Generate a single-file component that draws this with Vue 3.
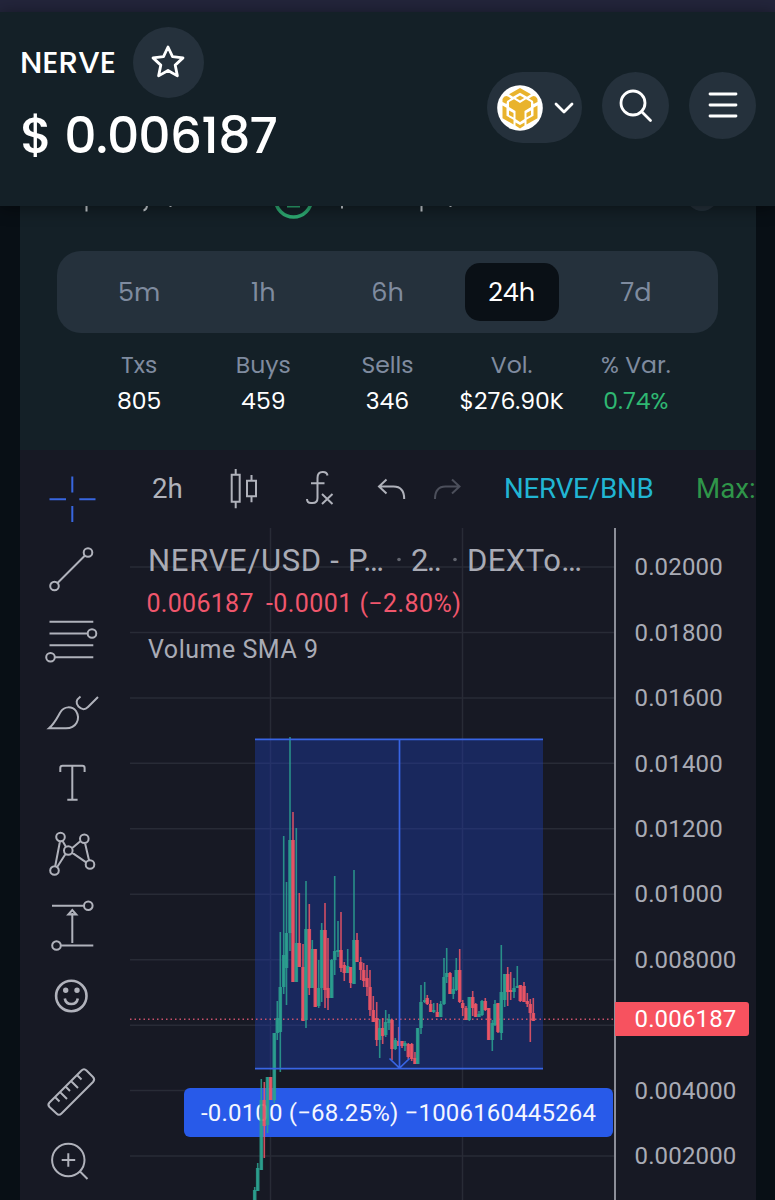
<script setup>
import { computed, ref } from 'vue';

const stats = [
  { period: '5m', label: 'Txs', value: '805' },
  { period: '1h', label: 'Buys', value: '459' },
  { period: '6h', label: 'Sells', value: '346' },
  { period: '24h', label: 'Vol.', value: '$276.90K' },
  { period: '7d', label: '% Var.', value: '0.74%', positive: true }
];
const active = ref('24h');

const prices = ['0.02000', '0.01800', '0.01600', '0.01400', '0.01200', '0.01000', '0.008000', '', '0.004000', '0.002000'];
const gridRows = prices.map((_, i) => 567 + i * 65.45);

// x, high, body top, body bottom, low, direction (1 up, 0 down)
const raw = [
  [254.7, 1187, 1190, 1200, 1200, 1], [257.7, 1163, 1168, 1191, 1191, 1], [261.3, 1079, 1100, 1170, 1170, 1],
  [264.3, 1082, 1100, 1126, 1158, 0], [267.5, 1077, 1077, 1125, 1133, 1], [270.7, 1077, 1077, 1100, 1100, 0],
  [274.3, 1033, 1033, 1100, 1103, 1], [277.3, 1001, 1018, 1033, 1040, 1], [280.3, 932, 987, 1032, 1072, 1],
  [283.7, 836, 955, 987, 994, 1], [286.5, 882, 933, 968, 1005, 1], [290, 737, 840, 933, 951, 1],
  [293, 812, 840, 982, 982, 0], [296.3, 828, 943, 982, 982, 1], [299.3, 893, 943, 967, 967, 0],
  [303, 944, 967, 1021, 1021, 0], [306, 881, 929, 1020, 1028, 1], [309.3, 904, 929, 988, 995, 0],
  [312.3, 940, 949, 988, 988, 1], [315.3, 949, 949, 1007, 1007, 0], [318.7, 960, 988, 1006, 1008, 1],
  [321.7, 923, 930, 988, 1002, 1], [325, 903, 930, 990, 1008, 0], [328, 938, 988, 998, 1010, 0],
  [331.7, 959, 960, 998, 998, 1], [334.7, 876, 951, 960, 975, 1], [338, 921, 950, 952, 957, 1],
  [341, 912, 950, 968, 972, 0], [344.3, 962, 965, 973, 981, 0], [347.7, 949, 966, 973, 973, 1],
  [350.7, 967, 967, 983, 988, 0], [354, 870, 940, 984, 984, 1], [357, 933, 940, 962, 962, 0],
  [360.7, 957, 962, 970, 980, 0], [363.7, 963, 970, 981, 987, 0], [367, 965, 978, 987, 996, 0],
  [370, 970, 987, 1010, 1016, 0], [373.3, 996, 1010, 1022, 1022, 0], [376.7, 1002, 1018, 1040, 1046, 0],
  [379.7, 1019, 1028, 1040, 1058, 1], [382.7, 1018, 1028, 1036, 1044, 0], [385.7, 1010, 1022, 1035, 1037, 1],
  [389, 1014, 1019, 1023, 1030, 1], [392, 1019, 1020, 1049, 1060, 0], [395.3, 1038, 1040, 1049, 1050, 1],
  [398.7, 1027, 1041, 1046, 1046, 0], [402, 1041, 1041, 1046, 1048, 0], [405, 1041, 1043, 1046, 1051, 1],
  [408.3, 1043, 1044, 1057, 1059, 0], [411.7, 1043, 1044, 1059, 1061, 0], [415, 1052, 1058, 1064, 1064, 0],
  [417.7, 1028, 1028, 1064, 1064, 1], [421, 985, 1002, 1028, 1034, 1], [424.7, 982, 1000, 1002, 1003, 1],
  [427.3, 995, 998, 1004, 1005, 0], [430.7, 1000, 1004, 1012, 1012, 0], [433.7, 1003, 1010, 1012, 1013, 1],
  [437.3, 1003, 1012, 1017, 1017, 0], [440.7, 1001, 1004, 1017, 1017, 1], [444, 958, 977, 1004, 1005, 1],
  [446.7, 948, 973, 977, 983, 1], [450, 972, 973, 994, 994, 0], [453.3, 977, 989, 994, 999, 1],
  [456.3, 958, 970, 990, 991, 1], [459.7, 949, 970, 1002, 1003, 0], [462.7, 1000, 1003, 1008, 1016, 0],
  [466, 1006, 1008, 1020, 1020, 0], [469.3, 997, 997, 1020, 1021, 1], [472.7, 991, 997, 1008, 1016, 0],
  [475.7, 1003, 1004, 1017, 1017, 0], [479, 1011, 1014, 1017, 1017, 1], [482, 1000, 1001, 1015, 1016, 1],
  [485.3, 998, 1001, 1010, 1011, 0], [488.7, 1008, 1008, 1040, 1040, 0], [492.3, 1020, 1023, 1040, 1051, 1],
  [495, 1000, 1004, 1025, 1026, 1], [498, 1003, 1003, 1032, 1033, 0], [501.3, 945, 992, 1033, 1040, 1],
  [504.7, 974, 974, 1000, 1007, 1], [507.7, 967, 974, 992, 1006, 0], [510.7, 972, 990, 992, 1000, 0],
  [514, 978, 988, 992, 998, 1], [517.3, 966, 986, 988, 988, 1], [520.3, 985, 985, 1001, 1002, 0],
  [524, 982, 986, 1002, 1002, 0], [527.3, 993, 1001, 1004, 1007, 0], [530.3, 999, 1004, 1013, 1042, 0],
  [533.3, 998, 1013, 1021, 1021, 0]
];
const candles = computed(() => raw.map(([x, high, top, bottom, low, up]) => ({
  x, high, top, low, height: Math.max(bottom - top, 1.5), color: up ? '#2ba18f' : '#ef5665'
})));

const circle = (x, y, r = 4.3) => `M${x - r} ${y}a${r} ${r} 0 1 0 ${2 * r} 0a${r} ${r} 0 1 0 ${-2 * r} 0`;
const tools = [
  { name: 'cross', d: 'M72.3 476.500v16M72.3 506v16M49.500 499.300h16.500M79.300 499.300h16.200' },
  { name: 'trend', d: `${circle(88, 552.5)}${circle(54.5, 586)}M57.500 583L85 555.500` },
  { name: 'fib', d: `M49.500 621.700H93.300M49.500 633.500H87.700${circle(92, 633.5)}M49.500 645.300H93.300M54.800 657.300H93.300${circle(50.5, 657.3)}` },
  { name: 'brush', d: 'M49 728.300C55 723 58 716 60.500 712C64 706 72 706 76 711C81 719 76 728.300 66 728.300ZM80.500 696.500C76 700 75.500 703 78.500 706.500C82 710 85 710 88 707L98 697' },
  { name: 'text', d: 'M60.300 772v-4q0-2.300 2.300-2.300h19.700q2.300 0 2.300 2.300v4M72.300 765.700v34M67.300 799.700h10.300' },
  { name: 'pattern', d: `${circle(60.5, 837)}${circle(84.3, 838.7)}${circle(68.3, 850.5)}${circle(54.5, 870.5)}${circle(90, 864.5)}M60 841.300L55.200 866.300M62.500 840.800L66 847M72 848.300L80.600 841M85 843L89 860.300M72 852.600L86.200 862.400M65.500 854L57.200 867` },
  { name: 'range', d: `M52 905.700H84${circle(88.3, 905.7)}M61 945.500H93.300${circle(56.5, 945.5)}M72.300 913v30M68.300 914.500h8l-4-4.500z` },
  { name: 'smile', d: `${circle(71.3, 996, 15.2)}M64.800 998.500q1 5.500 6.500 5.500t6.500-5.500${circle(65.7, 990.2, 1.4)}${circle(77, 990.2, 1.4)}` },
  { name: 'ruler', d: 'M49.500 1102.500L81.500 1070.500Q84 1068 86.500 1070.500L93 1077Q95.300 1079.400 93 1082L61.500 1113.500Q59 1116 56.500 1113.500L49.500 1107Q47.300 1104.700 49.500 1102.500M55 1097l4.500 4.500M60 1092l7 7M65.500 1086.500l4.500 4.500M71 1081l7 7M77 1075l4.500 4.500' },
  { name: 'zoom', d: `${circle(68.3, 1160, 16.2)}M61.700 1160h13.500M68.300 1153.300v13.500M80 1171.500l7.500 7.500` }
].map((tool, i) => ({ ...tool, box: `42 ${463 + i * 71 + (i > 7 ? 25 : 0)} 60 71` }));
</script>

<template>
  <div class="screen">
    <div class="status-bar"></div>
    <header class="header">
      <div class="token">
        <div class="token-name">
          <span>NERVE</span>
          <button class="round star">
            <svg width="36" height="36" viewBox="0 0 36 36"><path d="M18 3l4.500 9.600 10.500 1.300-7.800 7.200 2.200 10.800L18 26.500l-9.400 5.400 2.200-10.800L3 13.900l10.500-1.300z" /></svg>
          </button>
        </div>
        <div class="token-price">$ 0.006187</div>
      </div>
      <div class="actions">
        <button class="chain">
          <svg width="46" height="46" viewBox="0 0 46 46">
            <circle cx="23" cy="23" r="22.800" fill="#fff" />
            <g fill="#e9b32c">
              <path d="M23 3l11 6.300-4 2.500-7-4-7 4-4-2.500z" />
              <path d="M23 10.500l4.200 2.500-4.200 2.400-4.200-2.400z" />
              <path d="M5.500 14q2-4 5.500-2.500l3 2-4 2.500-.5 3-4-2zM40.500 14q-2-4-5.500-2.500l-3 2 4 2.500.5 3 4-2z" />
              <path d="M12 17l5-2.700 6 3.700 6-3.700 5 2.700v5l-6.500 4v8L23 37l-4.500-3v-8L12 22z" />
              <path d="M5.500 20.500l4 2.300v8l7 4v4.700l-11-6.300zM40.500 20.500l-4 2.300v8l-7 4v4.700l11-6.300z" />
              <path d="M12 25.500l4.500 2.500v4.500L12 30zM34 25.500L29.500 28v4.500L34 30zM18.500 37.500l4.500 2.500 4.500-2.500v3L23 43.500l-4.500-3z" />
            </g>
          </svg>
          <svg width="20" height="14" viewBox="0 0 20 14"><path d="M2 3l8 8 8-8" /></svg>
        </button>
        <button class="round">
          <svg width="36" height="36" viewBox="0 0 36 36"><circle cx="15" cy="15" r="12" /><path d="M23.500 23.500l9 9" /></svg>
        </button>
        <button class="round">
          <svg class="menu" width="32" height="32" viewBox="0 0 32 32"><path d="M3 3h26M3 14h26M3 25h26" /></svg>
        </button>
      </div>
    </header>

    <main class="panel">
      <section class="pool">
        <!-- bottom edge of the row scrolled under the header -->
        <svg class="scrolled" width="736" height="14" viewBox="20 206 736 14">
          <path d="M86.500 206v5.500M147 206q-.5 4-3.500 4.500M170.500 206v1M342 206v2.500M421.500 206v5.500M450.500 206v1" fill="none" stroke="#c5cbd0" stroke-width="2" />
          <circle cx="293.500" cy="199" r="18" fill="none" stroke="#2daa72" stroke-width="3.500" />
          <path d="M287 206h13" stroke="#2daa72" stroke-width="3" />
          <circle cx="702" cy="195" r="16" fill="#25313b" />
        </svg>
        <div class="periods">
          <button
            v-for="item in stats"
            :key="item.period"
            :class="{ active: active === item.period }"
            @click="active = item.period"
          >{{ item.period }}</button>
        </div>
        <dl class="stats">
          <div v-for="item in stats" :key="item.label">
            <dt>{{ item.label }}</dt>
            <dd :class="{ positive: item.positive }">{{ item.value }}</dd>
          </div>
        </dl>
      </section>

      <section class="chart">
        <aside class="tools">
          <svg v-for="tool in tools" :key="tool.name" :class="tool.name" width="60" height="71" :viewBox="tool.box">
            <path :d="tool.d" />
          </svg>
        </aside>
        <div class="chart-main">
          <nav class="toolbar">
            <span class="interval">2h</span>
            <svg class="candle-icon" width="32" height="42" viewBox="228 468 32 42">
              <path d="M231.700 474.700h8v27h-8zM235.700 469v5.700M235.700 501.700v6.500M247 480.700h9v15.500h-9zM251.500 475v5.700M251.500 496.200v6" />
            </svg>
            <svg class="fx-icon" width="32" height="42" viewBox="304 468 32 42">
              <path d="M307 499q0 4 4 4h1.500q5 0 5-5v-20q0-6 5-6h.5q4 0 4.500 3.500M311 483.300h13.500M322 494l10.500 10M332.500 494l-10.500 10" />
            </svg>
            <svg class="undo-icon" width="30" height="26" viewBox="377 475 30 26"><path d="M386.500 478.500l-7.500 7 7.500 7M379.500 485.500h14q10.700 0 10.700 12.500" /></svg>
            <svg class="redo-icon" width="30" height="26" viewBox="433 475 30 26"><path d="M452 478.500l7.500 7-7.500 7M459 485.500h-13.500q-10.500 0-10.500 12.500" /></svg>
            <span class="pair">NERVE/BNB</span>
            <span class="max">Max:</span>
          </nav>
          <div class="plot-row">
            <svg class="plot" width="484" height="672" viewBox="130 528 484 672">
              <g stroke="#282b36" stroke-width="1.500">
                <path v-for="y in gridRows" :key="y" :d="`M130 ${y}H614`" />
                <path d="M270.500 528V1200M462.500 528V1200" />
              </g>
              <rect x="255" y="739" width="288" height="330" fill="#1d3fb4" fill-opacity=".4" />
              <path d="M130 1019.300H614" stroke="#c8506a" stroke-width="1.500" stroke-dasharray="1.500 3" />
              <rect x="184" y="1088" width="429" height="49" rx="6" fill="#285ae9" />
              <text x="201" y="1121" textLength="395" fill="#f4f6ff" font-size="24">-0.0100 (−68.25%) −1006160445264</text>
              <g v-for="c in candles" :key="c.x" :fill="c.color" fill-opacity=".85">
                <rect :x="c.x - .8" :y="c.high" width="1.600" :height="c.low - c.high" />
                <rect :x="c.x - 1.8" :y="c.top" width="3.600" :height="c.height" />
              </g>
              <path d="M255 739.300H543M255 1068.700H543M399.500 739V1068M389.500 1058.500l10 9.500 10-9.500" fill="none" stroke="#3865e4" stroke-width="1.700" />
              <g fill="#a9abb5" font-size="31">
                <text x="148" y="571" textLength="236">NERVE/USD - P…</text>
                <text x="411" y="571" textLength="31">2..</text>
                <text x="467" y="571" textLength="115">DEXTo…</text>
              </g>
              <circle cx="399" cy="559.500" r="1.800" fill="#62656f" />
              <circle cx="455" cy="559.500" r="1.800" fill="#62656f" />
              <g fill="#f0566c" font-size="25">
                <text x="146.500" y="612" textLength="107">0.006187</text>
                <text x="266" y="612" textLength="195">-0.0001 (−2.80%)</text>
              </g>
              <text x="148" y="658" textLength="170" fill="#a9abb5" font-size="25">Volume SMA 9</text>
            </svg>
            <div class="axis">
              <span v-for="(price, i) in prices" :key="i">{{ price }}</span>
              <strong class="last-price">0.006187</strong>
            </div>
          </div>
        </div>
      </section>
    </main>
  </div>
</template>

<style>
body {
  margin: 0;
  background: #080f15;
}
</style>

<style scoped>
.screen {
  width: 775px;
  height: 1200px;
  overflow: hidden;
  background: #080f15;
  font-family: Poppins, Inter, sans-serif;
  color: #fff;
}

.status-bar {
  height: 12px;
  background: #23253b;
}

button {
  border: 0;
  padding: 0;
  font: inherit;
  color: inherit;
  display: flex;
  align-items: center;
  justify-content: center;
}

.header {
  position: relative;
  z-index: 1;
  box-sizing: border-box;
  height: 194px;
  padding: 14px 19px 0 20px;
  display: flex;
  justify-content: space-between;
  background: #142027;
  box-shadow: 0 2px 16px rgba(0, 0, 0, .45);
}

.token-name {
  display: flex;
  align-items: center;
  gap: 17px;
  height: 72px;
  font-size: 31px;
  font-weight: 500;
}

.token-name span {
  width: 96px;
  white-space: nowrap;
}

.token-price {
  padding-top: 1px;
  font-size: 50.5px;
  font-weight: 500;
  line-height: 74px;
  letter-spacing: -.9px;
  white-space: nowrap;
}

.actions {
  display: flex;
  align-items: flex-start;
  gap: 20px;
  padding-top: 46px;
}

.round,
.chain {
  width: 67px;
  height: 67px;
  border-radius: 50%;
  background: #25313c;
}

.star {
  width: 71px;
  height: 71px;
}

.star svg {
  margin-right: 1px;
}

.chain {
  box-sizing: border-box;
  width: 95px;
  height: 71px;
  padding: 1px 0 0 2px;
  border-radius: 36px;
  gap: 11px;
}

.header svg {
  fill: none;
  stroke: #fff;
  stroke-width: 2.8;
  stroke-linecap: round;
  stroke-linejoin: round;
}

.chain svg:first-child {
  stroke: none;
}

.menu {
  margin-top: 2px;
}

.panel {
  width: 736px;
  margin-left: 20px;
}

.pool {
  box-sizing: border-box;
  height: 244px;
  padding: 0 38px 0 37px;
  background: #142027;
}

.scrolled {
  display: block;
  margin: 0 -37px 30.5px;
}

.periods,
.stats {
  display: grid;
  grid-template-columns: repeat(5, 1fr);
  padding: 0 20px;
}

.periods {
  box-sizing: border-box;
  height: 82px;
  align-items: center;
  border-radius: 24px;
  background: #25313c;
}

.periods button {
  height: 58px;
  margin: 0 15px;
  padding-top: 1px;
  box-sizing: border-box;
  border-radius: 15px;
  background: none;
  font-size: 25.5px;
  color: #7f8b9f;
}

.periods .active {
  background: #0a1016;
  color: #fff;
}

.stats {
  margin: 14.4px 0 0;
  text-align: center;
  font-size: 23.5px;
  line-height: 36px;
}

.stats dt {
  color: #7f8b9f;
}

.stats dd {
  margin: 0;
  white-space: nowrap;
}

.stats .positive {
  color: #2fb872;
}

.chart {
  display: flex;
  height: 750px;
  overflow: hidden;
  background: #171924;
  font-family: Roboto, sans-serif;
}

.tools {
  width: 110px;
  flex: none;
  display: flex;
  flex-direction: column;
  padding: 13px 0 0 22px;
  box-sizing: border-box;
}

.tools svg {
  flex: none;
}

.tools .ruler {
  margin-top: 25px;
}

.tools path,
.toolbar path {
  fill: none;
  stroke: #b0b2bb;
  stroke-width: 2;
}

.tools .cross path {
  stroke: #3866df;
}

.tools .smile path {
  stroke-width: 2.6;
}

.chart-main {
  width: 626px;
}

.toolbar {
  display: flex;
  align-items: center;
  height: 78px;
  overflow: hidden;
  white-space: nowrap;
  font-size: 27.7px;
  color: #b0b2bb;
}

.toolbar svg {
  flex: none;
}

.toolbar span {
  margin-bottom: 2px;
}

.interval {
  width: 76px;
  margin-left: 22px;
}

.fx-icon {
  margin-left: 44px;
}

.undo-icon {
  margin-left: 41px;
}

.redo-icon {
  margin-left: 26px;
}

.toolbar .redo-icon path {
  stroke: #4c4f5b;
}

.pair {
  width: 192px;
  margin-left: 41px;
  letter-spacing: -.2px;
  color: #21b5d3;
}

.max {
  color: #2f9549;
}

.plot-row {
  display: flex;
}

.plot {
  flex: none;
  font-family: Roboto, sans-serif;
}

.axis {
  position: relative;
  flex: 1;
  display: flex;
  flex-direction: column;
  box-sizing: border-box;
  height: 672px;
  padding-top: 7.3px;
  border-left: 2px solid #8c8e98;
  font-size: 24px;
  letter-spacing: .15px;
  color: #a9abb5;
}

.axis span {
  flex: none;
  height: 65.45px;
  line-height: 65.45px;
  padding-left: 18.5px;
}

.last-price {
  position: absolute;
  top: 474px;
  left: -1px;
  width: 134px;
  height: 34px;
  box-sizing: border-box;
  padding-left: 19.5px;
  border-radius: 0 3px 3px 0;
  background: #f7525f;
  line-height: 35px;
  font-weight: 400;
  color: #fff;
}
</style>
